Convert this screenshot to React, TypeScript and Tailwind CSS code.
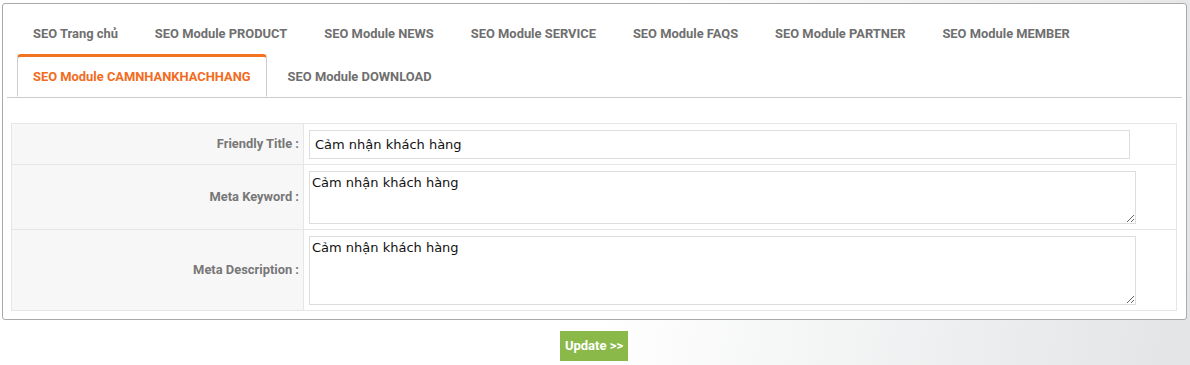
const tabs = [
	"SEO Trang chủ",
	"SEO Module PRODUCT",
	"SEO Module NEWS",
	"SEO Module SERVICE",
	"SEO Module FAQS",
	"SEO Module PARTNER",
	"SEO Module MEMBER",
	"SEO Module CAMNHANKHACHHANG",
	"SEO Module DOWNLOAD",
];
const active = "SEO Module CAMNHANKHACHHANG";
const value = "Cảm nhận khách hàng";

function Tab({ label }: { label: string }) {
	const isActive = label === active;
	return (
		<div
			className={
				isActive
					? "h-[43px] mr-[5px] -mb-px px-[15px] border border-[#ccc] border-b-white border-t-[3px] border-t-[#f47321] rounded-t-[4px] bg-white flex items-center text-[#f26b21]"
					: "h-[43px] mr-[5px] px-[15px] border border-transparent border-t-[3px] flex items-center text-[#6f6f6f]"
			}
		>
			{label}
		</div>
	);
}

export default function App() {
	return (
		<div
			className="w-[1190px] h-[365px] overflow-hidden bg-[linear-gradient(100deg,#ffffff_52%,#e2e4e5_100%)]"
			style={{ fontFamily: "Roboto, 'Liberation Sans', sans-serif" }}
		>
			<div className="ml-[2px] pt-[3px] w-[1185px]">
				<div className="border border-[#aaa] rounded-[3px] bg-white pt-[7px] pb-[8px]">
					<div className="mx-[4px] pl-[10px] border-b border-[#ccc] flex flex-wrap text-[12.9px] font-bold">
						{tabs.map((t) => (
							<Tab key={t} label={t} />
						))}
					</div>

					<table className="ml-[8px] mt-[25px] w-[1166px] border-collapse">
						<tbody>
							<Row label="Friendly Title :" h="h-[41px]">
								<input
									defaultValue={value}
									className="w-[821px] h-[29px] border border-[#ddd] px-[5px] text-[13px] text-[#111] outline-none font-['DejaVu_Sans',sans-serif]"
								/>
							</Row>
							<Row label="Meta Keyword :" h="h-[65px]">
								<textarea
									defaultValue={value}
									className="block w-[827px] h-[53px] border border-[#ddd] px-[2px] pt-[1px] text-[13px] text-[#111] outline-none font-['DejaVu_Sans',sans-serif]"
								/>
							</Row>
							<Row label="Meta Description :" h="h-[81px]">
								<textarea
									defaultValue={value}
									className="block w-[827px] h-[69px] border border-[#ddd] px-[2px] pt-[1px] text-[13px] text-[#111] outline-none font-['DejaVu_Sans',sans-serif]"
								/>
							</Row>
						</tbody>
					</table>
				</div>
			</div>

			<div className="flex justify-center mt-[11px] pr-[2px]">
				<button className="w-[68px] h-[30px] bg-[#8ab94a] text-white text-[13px] font-bold">
					Update &gt;&gt;
				</button>
			</div>
		</div>
	);
}

function Row({
	label,
	h,
	children,
}: {
	label: string;
	h: string;
	children: React.ReactNode;
}) {
	return (
		<tr className={h}>
			<td className="w-[292px] border border-[#e6e6e6] bg-[#f7f7f7] text-right pr-[4px] text-[12.9px] font-bold text-[#777] align-middle">
				{label}
			</td>
			<td className="border border-[#e6e6e6] pl-[5px] align-middle">
				{children}
			</td>
		</tr>
	);
}
